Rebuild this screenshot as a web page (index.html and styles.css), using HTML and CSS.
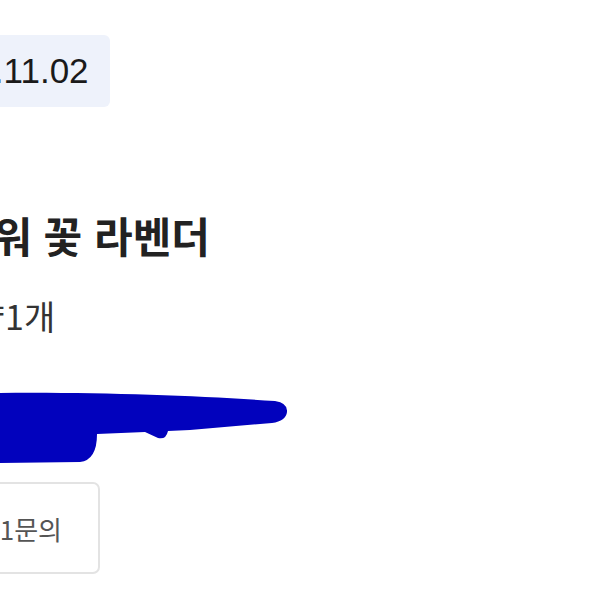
FILE: index.html
```html
<!DOCTYPE html>
<html lang="ko">
<head>
<meta charset="UTF-8">
<title>상품 상세</title>
<link rel="stylesheet" href="styles.css">
</head>
<body>
<div class="detail">
<div class="date-chip">2023.11.02</div>
<h1 class="title">드라이플라워 꽃 라벤더</h1>
<p class="qty">수량 1개</p>
<div class="redact">
<svg width="300" height="80" viewBox="0 388 300 80">
<path d="M0,393 C100,392 200,396 275,401 Q288,403 287,412 Q286,421 272,423 L190,430 L168,431 Q166,440 158,438 L145,432 L97,434 Q97,460 80,462 L0,463 Z" fill="#0202bd"/>
</svg>
</div>
<div class="actions">
<button class="ask-btn">1:1문의</button>
</div>
</div>
</body>
</html>
```

FILE: styles.css
```css
html, body {
margin: 0;
padding: 0;
background-color: #fff;
overflow: hidden;
}
.detail {
width: 593px;
height: 593px;
overflow: hidden;
font-family: "Noto Sans CJK KR", "Noto Sans", sans-serif;
color: #222;
}
.date-chip {
display: inline-flex;
align-items: center;
height: 72px;
margin-top: 35px;
margin-left: -106px;
padding: 0 21px 0 22px;
background-color: #eef2fb;
border-radius: 6px;
font-family: "Liberation Sans", Arial, sans-serif;
font-size: 35px;
color: #1a1a1a;
}
.title {
margin: 103px 0 0 -200px;
font-size: 42px;
line-height: 50px;
font-weight: 700;
white-space: nowrap;
color: #222;
}
.qty {
margin: 36px 0 0 -58px;
font-size: 34px;
line-height: 40px;
word-spacing: -9px;
color: #333;
white-space: nowrap;
}
.redact {
margin-top: 52px;
height: 80px;
}
.redact svg {
display: block;
}
.actions {
margin-top: 14px;
}
.ask-btn {
display: flex;
align-items: center;
justify-content: flex-end;
width: 200px;
height: 92px;
margin-left: -100px;
padding: 0 36px 0 0;
background-color: #fff;
border: 2px solid #e3e3e3;
border-radius: 7px;
font-family: "Noto Sans CJK KR", "Noto Sans", sans-serif;
font-size: 26px;
color: #555;
}
```
